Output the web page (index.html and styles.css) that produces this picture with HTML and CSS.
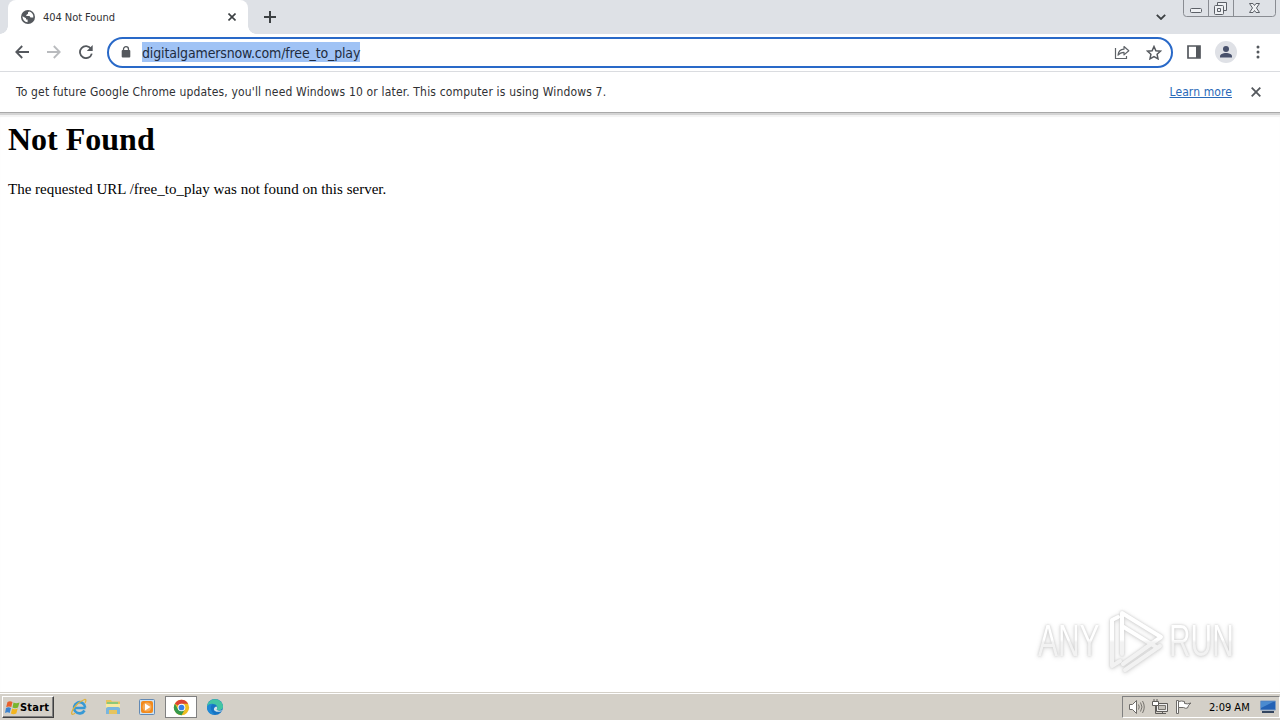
FILE: index.html
```html
<!DOCTYPE html>
<html lang="en">
<head>
<meta charset="utf-8">
<title>404 Not Found</title>
<link rel="stylesheet" href="styles.css">
</head>
<body>
<div class="screen">
  <header class="tabstrip">
    <div class="tab">
      <svg class="globe" width="14" height="14" viewBox="0 0 14 14"><circle cx="7" cy="7" r="7" fill="#54585d"/><path d="M8.2 1.4 7 2.2v1.6L5.3 4.9v1.2h3.2l1 1.5h2.8A5.5 5.5 0 0 0 8.2 1.4zM1.5 6.2 5 8.2v1.4h1.6v2.7A5.4 5.4 0 0 1 1.5 6.2z" fill="#fff"/></svg>
      <span class="tab-title">404 Not Found</span>
      <svg class="tab-close" width="8" height="8" viewBox="0 0 8 8"><path d="M.5.5l7 7M7.5.5l-7 7" stroke="#3c4043" stroke-width="1.6"/></svg>
    </div>
    <svg class="new-tab" width="12" height="12" viewBox="0 0 12 12"><path d="M6 0v12M0 6h12" stroke="#3c4043" stroke-width="2"/></svg>
    <svg class="tab-search" width="10" height="6" viewBox="0 0 10 6"><path d="M.8.8 5 5 9.2.8" fill="none" stroke="#3c4043" stroke-width="1.8"/></svg>
    <svg class="caption" width="94" height="18" viewBox="0 0 94 18"><path d="M.5 0v13.5q0 3 3 3h86q3 0 3-3V0M25.500 0v16M50.500 0v16" fill="none" stroke="#898c92"/><g fill="#eef0f3" stroke="#5c6067"><rect x="7.500" y="8.500" width="11" height="4" rx="1"/><path d="M34.500 2.500h9v8h-9z"/><rect x="31.500" y="5.500" width="9" height="9" rx="1"/><path d="M34.500 8.500h3v3h-3z"/><path d="M66.500 3.500h3.500l1.500 2 1.500-2h3.500l-3 4.500 3 4.500h-3.500l-1.500-2-1.500 2h-3.500l3-4.500z"/></g></svg>
  </header>

  <nav class="toolbar">
    <svg class="back" width="14" height="14" viewBox="0 0 14 14"><path d="M14 7H1.500M7.200 1 1.300 7l5.900 6" fill="none" stroke="#54585d" stroke-width="1.800"/></svg>
    <svg class="forward" width="14" height="14" viewBox="0 0 14 14"><path d="M0 7h12.500M6.800 1l5.900 6-5.900 6" fill="none" stroke="#b9bbbe" stroke-width="1.800"/></svg>
    <svg class="reload" width="14" height="14" viewBox="0 0 14 14"><path d="M12 3.800A6 6 0 1 0 12.800 8.600" fill="none" stroke="#54585d" stroke-width="1.800"/><path d="M13.700 0v6H7.800z" fill="#54585d"/></svg>
    <div class="omnibox">
      <svg class="lock" width="10" height="12" viewBox="0 0 10 12"><path d="M2.500 5V3.200a2.500 2.500 0 0 1 5 0V5" fill="none" stroke="#54585d" stroke-width="1.300"/><rect x=".7" y="4" width="8.600" height="7.500" rx="1" fill="#54585d"/></svg>
      <span class="url">digitalgamersnow.com/free_to_play</span>
      <svg class="share" width="16" height="14" viewBox="0 0 16 14"><path d="M1.500 3v10.500h11V11" fill="none" stroke="#5f6368" stroke-width="1.200"/><path d="M4 10.200c.4-3.700 2.300-5.700 6-6V1.500l4.800 4.200L10 9.900V7.300c-2.700 0-4.500.9-6 2.900z" fill="none" stroke="#5f6368" stroke-width="1.200" stroke-linejoin="round"/></svg>
      <svg class="star" width="16" height="15" viewBox="0 0 16 15"><path d="M8 1.500l1.900 4.200 4.600.5-3.400 3.100.9 4.500-4-2.300-4 2.300.9-4.500L1.500 6.200l4.600-.5z" fill="none" stroke="#54585d" stroke-width="1.500"/></svg>
    </div>
    <svg class="panel" width="14" height="14" viewBox="0 0 14 14"><path d="M1 1h12v12H1z" fill="none" stroke="#54585d" stroke-width="1.700"/><path d="M9 1h4v12H9z" fill="#54585d"/></svg>
    <svg class="avatar" width="22" height="22" viewBox="0 0 22 22"><circle cx="11" cy="11" r="11" fill="#dfe1e6"/><circle cx="11" cy="8" r="3" fill="#47506b"/><path d="M5 16.500v-1.200c0-2 3-3.300 6-3.300s6 1.300 6 3.300v1.200z" fill="#47506b"/></svg>
    <svg class="menu" width="4" height="14" viewBox="0 0 4 14"><g fill="#54585d"><circle cx="2" cy="2" r="1.500"/><circle cx="2" cy="7" r="1.500"/><circle cx="2" cy="12" r="1.500"/></g></svg>
  </nav>

  <aside class="infobar">
    <span class="notice">To get future Google Chrome updates, you'll need Windows 10 or later. This computer is using Windows 7.</span>
    <a class="learn">Learn more</a>
    <svg class="dismiss" width="10" height="10" viewBox="0 0 10 10"><path d="M.7.7l8.600 8.600M9.300.7.7 9.300" stroke="#54585d" stroke-width="1.800"/></svg>
  </aside>

  <main class="page">
    <h1 class="heading">Not Found</h1>
    <p class="message">The requested URL /free_to_play was not found on this server.</p>
    <div class="watermark">
      <span class="mark-text">ANY</span>
      <svg class="mark-logo" width="60" height="66" viewBox="0 0 60 66"><defs><linearGradient id="fade" gradientUnits="userSpaceOnUse" x1="0" y1="0" x2="0" y2="66"><stop offset=".48" stop-color="#fff"/><stop offset=".52" stop-color="#f2f2f2"/></linearGradient></defs><g fill="none" stroke="url(#fade)" stroke-width="4" stroke-linejoin="round" stroke-linecap="round"><path d="M12 9 6 12v46l8-5"/><path d="M16 46V5l39 24-38 27"/><path d="M16 18l34 21"/><path d="M19 62 54 38"/></g></svg>
      <span class="mark-text">RUN</span>
    </div>
  </main>

  <footer class="taskbar">
    <div class="start">
      <svg width="16" height="15" viewBox="0 0 16 15"><path d="M3.500 2Q6 .5 8.500 2L7.300 7Q5 5.800 2.200 7z" fill="#e8602c"/><path d="M9.500 2.500q2.500 1.300 6 0L14 7.500q-3 1.300-5.500 0z" fill="#78b52d"/><path d="M2 8q2.500-1.300 5 0L5.700 13Q3.500 11.700 1 13z" fill="#3c83cf"/><path d="M8.200 8.500q2.500 1.300 5.500 0l-1.400 5q-3 1.300-5.400 0z" fill="#f3b51e"/></svg>
      <span class="start-text">Start</span>
    </div>
    <div class="quick">
      <svg class="task" width="34" height="22" viewBox="0 0 34 22"><path d="M23.500 12H13.200M22.500 14.500a5.600 5.600 0 1 1 .7-3" fill="none" stroke="#3799d5" stroke-width="2.600"/><path d="M23 7c1.700-3 1-4.500-1.500-3C16.500 6 10.500 12.500 9.700 16.500c-.4 2.500 1.500 2 3.500.8" fill="none" stroke="#dfb33f" stroke-width="1.300"/></svg>
      <svg class="task" width="34" height="22" viewBox="0 0 34 22"><path d="M10 4h5l1 1.500h8V18H10z" fill="#e6c45e"/><path d="M11 6h11v5H11z" fill="#8ec878"/><path d="M10 8h14v4H10z" fill="#f8e9a0"/><path d="M10 18v-5q0-2 2-2h10q2 0 2 2v5h-3v-4h-8v4z" fill="#79b6df"/></svg>
      <svg class="task" width="34" height="22" viewBox="0 0 34 22"><rect x="9.500" y="3.500" width="15" height="15" rx="1" fill="#cce3f5" stroke="#6289b4"/><rect x="11" y="5" width="12" height="12" rx="2" fill="#f28a1c"/><circle cx="17" cy="11" r="4.500" fill="#f5ab59"/><path d="M15 7.500v7l5.500-3.500z" fill="#fff"/></svg>
      <svg class="task active" width="32" height="22" viewBox="0 0 32 22"><circle cx="16" cy="11" r="8" fill="#efbd22"/><path d="M16 11 9.070 7A8 8 0 0 1 22.930 7H16z" fill="#dd4334"/><path d="M9.070 7A8 8 0 0 0 16 19l3.500-6H12.500z" fill="#35994d"/><circle cx="16" cy="11" r="4" fill="#fff"/><circle cx="16" cy="11" r="3" fill="#397fe7"/></svg>
      <svg class="task" width="34" height="22" viewBox="0 0 34 22"><circle cx="17" cy="11" r="8" fill="#1674c4"/><path d="M9 11C9.500 1 23.500.5 25 10c.4 3.500-3 5-6.500 3.800 2-2.500.2-5.800-3.500-5.800-2.500 0-5 1-6 3z" fill="#43c5a3"/><path d="M9 11c1-3 3.500-3.500 6-3.200-3 2-3.500 6.200 1.500 10.700C12 19 8.500 15 9 11z" fill="#2089d5"/><path d="M18.500 10.500c1 1 .8 2.500 0 3.300 2 1.200 4 1.200 6 .2-1.500 2-5 2.500-7.500 1-2-1.500-1-4 1.500-4.500z" fill="#d5e4e8"/></svg>
    </div>
    <div class="tray">
      <svg class="speaker" width="17" height="16" viewBox="0 0 17 16"><path d="M1.500 5.500h3l4-4v13l-4-4h-3z" fill="#fff" stroke="#6d6b68"/><path d="M10.500 5.500q1.500 2.500 0 5M12.500 3.500q3 4.500 0 9M14.500 2q3.500 6 0 12" fill="none" stroke="#77746f"/></svg>
      <svg class="network" width="16" height="16" viewBox="0 0 16 16"><path d="M4.500 4.500h11v8h-11z" fill="#eee" stroke="#5e5c59"/><path d="M6.500 6.500h7v4h-7z" fill="#c5c2bb" stroke="#77746f"/><path d="M7 14.500h7M10.500 12v3M3.500 7v7.500H7" fill="none" stroke="#5e5c59"/><path d="M.5 2.500h6v4h-6z" fill="#fff" stroke="#5e5c59"/><path d="M2 0v2M5 0v2" stroke="#5e5c59"/></svg>
      <svg class="flag" width="16" height="16" viewBox="0 0 16 16"><path d="M.5 1.500h2v13h-2z" fill="#fff" stroke="#6d6b68"/><path d="M2.500 2.500q3-1 6 0v2q3 1 6.500-.5-3 2-3.500 5-2 .8-4-.5h-5z" fill="#fff" stroke="#6d6b68"/></svg>
      <span class="clock">2:09 AM</span>
      <svg class="desktop" width="16" height="14" viewBox="0 0 16 14"><path d="M.5 1h15v9H.5z" fill="#2462b5" stroke="#7c9cc4"/><path d="M1 1.500h13L1 8z" fill="#4b8bd0"/><path d="M2 12h12" stroke="#34465f" stroke-width="2"/></svg>
    </div>
  </footer>
</div>
</body>
</html>
```
FILE: styles.css
```css
* { box-sizing: border-box; }
body { margin: 0; background: #fff; font-family: "DejaVu Sans Condensed", "DejaVu Sans", sans-serif; color: #303134; }
svg { display: block; flex: none; }
.screen { width: 1280px; height: 720px; display: flex; flex-direction: column; overflow: hidden; }
span, a { white-space: nowrap; }

.tabstrip { height: 34px; flex: none; display: flex; align-items: flex-start; background: #dee1e6; padding-left: 8px; }
.tab { position: relative; width: 240px; height: 34px; display: flex; align-items: center; background: #fff; border-radius: 8px 8px 0 0; padding: 0 12px 0 13px; }
.tab::before, .tab::after { content: ""; position: absolute; bottom: 0; width: 8px; height: 8px; }
.tab::before { left: -8px; background: radial-gradient(circle at 0 0, #dee1e6 7.5px, #fff 8px); }
.tab::after { right: -8px; background: radial-gradient(circle at 8px 0, #dee1e6 7.5px, #fff 8px); }
.tab-title { margin-left: 8px; font-size: 11px; letter-spacing: -0.05px; }
.tab-close { margin-left: auto; }
.new-tab { margin: 11px 0 0 16px; }
.tab-search { margin: 14px 0 0 auto; }
.caption { margin: 0 3px 0 17px; }

.toolbar { height: 38px; flex: none; display: flex; align-items: center; padding: 0 20px 1px 15px; border-bottom: 1px solid #dadce0; }
.forward { margin-left: 18px; }
.reload { margin-left: 18px; }
.omnibox { width: 1066px; height: 31px; margin: 1px 0 0 14px; display: flex; align-items: center; border: 2px solid #2969c8; border-radius: 16px; padding: 0 9px 1px 12px; }
.url { margin-left: 11px; height: 20px; line-height: 22px; background: #a0c3f5; color: #202c40; font-size: 14px; letter-spacing: -0.15px; }
.share { margin-left: auto; }
.star { margin-left: 16px; }
.panel { margin-left: 14px; }
.avatar { margin-left: 14px; }
.menu { margin-left: auto; }

.infobar { height: 40px; flex: none; display: flex; align-items: center; padding: 0 19px 0 16px; font-size: 12px; }
.notice { letter-spacing: 0.162px; }
.learn { margin-left: auto; color: #2969b8; text-decoration: underline; letter-spacing: 0.1px; }
.dismiss { margin-left: 19px; }

.page { flex: 1; position: relative; padding: 0 8px; border-top: 1px solid #a9a9a9; box-shadow: inset 0 2px 0 #d4d4d4, inset 0 4px 1px #f2f2f2; font-family: "Liberation Serif", serif; color: #000; }
.heading { margin: 8px 0 0; font-size: 32px; line-height: 37px; }
.message { margin: 22px 0 0; font-size: 15px; line-height: 19px; letter-spacing: 0.01px; }
.watermark { position: absolute; left: 1038px; top: 495px; display: flex; align-items: center; filter: drop-shadow(0 0 1px #ccc) drop-shadow(0 1px 2px #ddd); }
.mark-text { display: block; width: 66px; font: 44px/66px "Liberation Sans", sans-serif; color: transparent; background: linear-gradient(#fff 48%, #f2f2f2 52%); -webkit-background-clip: text; background-clip: text; transform-origin: 0 50%; transform: scaleX(.68); overflow: visible; }
.mark-text { width: 94px; margin-right: -28px; }
.mark-logo { margin: 0 3px 0 2px; }

.taskbar { height: 28px; flex: none; display: flex; align-items: center; background: #d4d0c8; border-top: 1px solid #d4d0c8; box-shadow: inset 0 1px 0 #fff; padding: 1px 0 0 2px; }
.start { width: 52px; height: 22px; display: flex; align-items: center; background: #d4d0c8; border: 1px solid; border-color: #fff #404040 #404040 #fff; box-shadow: inset -1px -1px 0 #808080; padding-left: 1px; }
.start-text { font-size: 11px; font-weight: bold; letter-spacing: 0.2px; color: #000; }
.quick { display: flex; margin-left: 8px; }
.active { background: #fff; outline: 1px solid #808080; outline-offset: -1px; border-top: 1px solid #404040; border-left: 1px solid #404040; margin: 0 1px; }
.tray { margin-left: auto; width: 158px; height: 22px; display: flex; align-items: center; border: 1px solid; border-color: #808080 #fff #fff #808080; padding-left: 5px; }
.network { margin-left: 7px; }
.flag { margin-left: 8px; }
.clock { margin-left: 17px; font-size: 11px; color: #000; }
.desktop { margin-left: auto; margin-right: 3px; }
```
